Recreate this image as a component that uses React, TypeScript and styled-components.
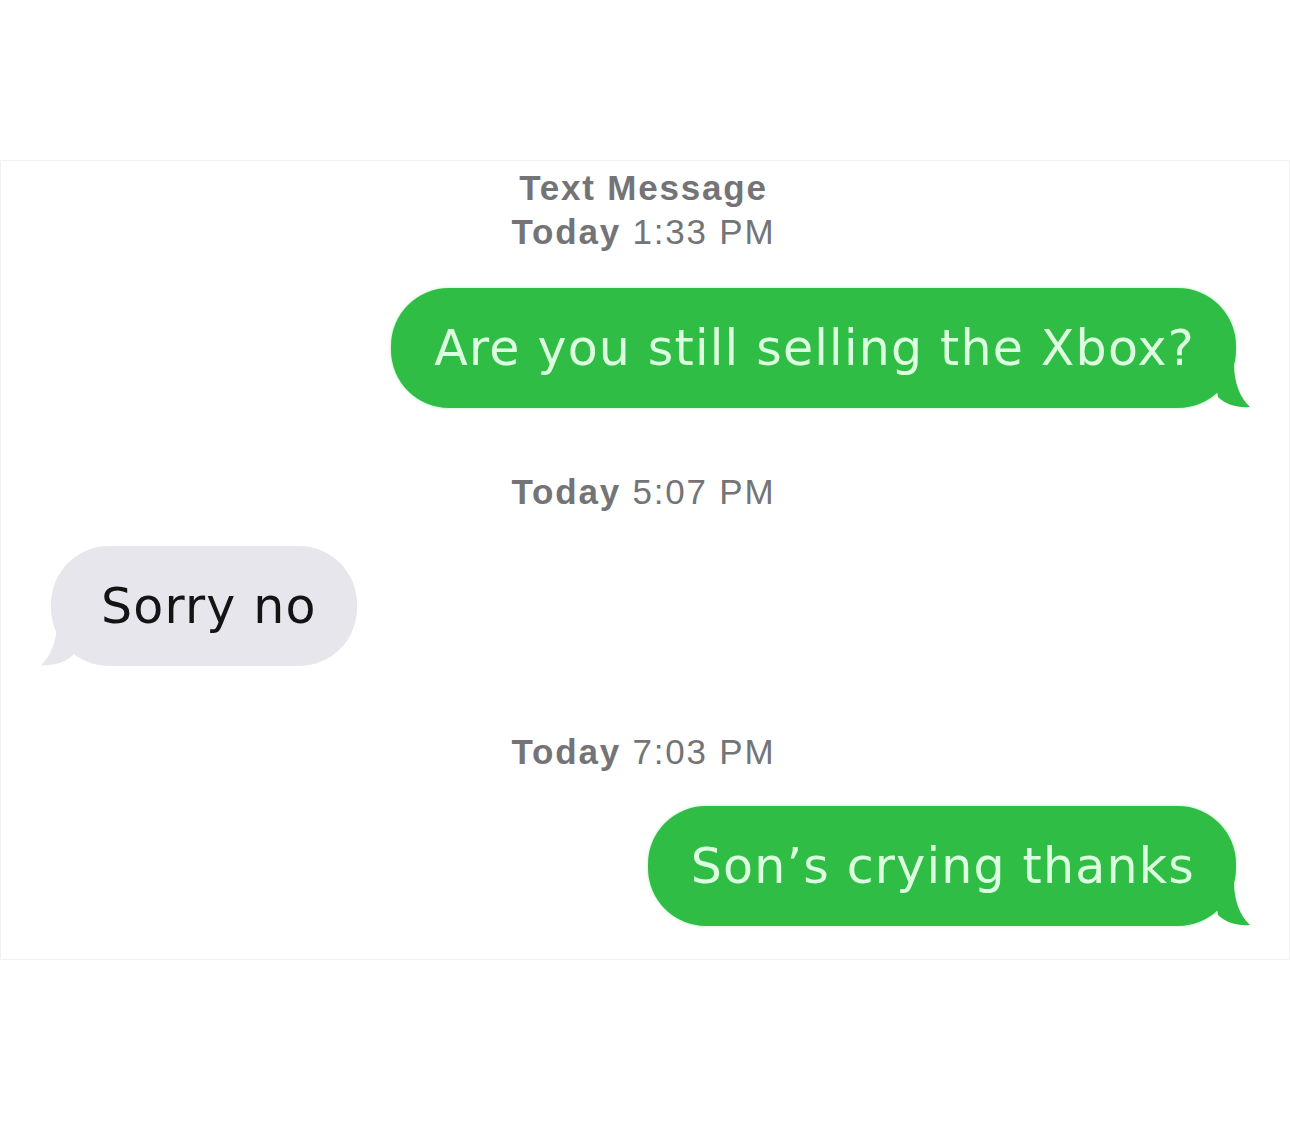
import React from "react";
import styled, { createGlobalStyle } from "styled-components";

const Global = createGlobalStyle`
  html, body { margin: 0; padding: 0; background: #ffffff; }
  body { font-family: "Liberation Sans", Arial, sans-serif; }
`;

const Page = styled.div`
  width: 1290px;
  height: 1148px;
  background: #ffffff;
  padding-top: 160px;
  box-sizing: border-box;
`;

const Panel = styled.div`
  height: 800px;
  border: 1px solid #f1f1f1;
  box-sizing: border-box;
  display: flex;
  flex-direction: column;
  padding: 5px 53px 0 50px;
`;

const Stamp = styled.div<{ $top: number }>`
  margin-top: ${(p) => p.$top}px;
  align-self: center;
  text-align: center;
  color: #747477;
  font-size: 35px;
  line-height: 44px;
  letter-spacing: 1.8px;
  font-family: "Liberation Sans", Arial, sans-serif;
`;

const Strong = styled.span`
  font-weight: 700;
`;

const Row = styled.div<{ $side: "left" | "right"; $top: number }>`
  display: flex;
  justify-content: ${(p) => (p.$side === "right" ? "flex-end" : "flex-start")};
  margin-top: ${(p) => p.$top}px;
`;

const Bubble = styled.div<{ $sent: boolean }>`
  position: relative;
  height: 120px;
  border-radius: 58px;
  padding: ${(p) => (p.$sent ? "0 41px 0 43px" : "0 40px 0 50px")};
  display: flex;
  align-items: center;
  font-family: "DejaVu Sans", "Liberation Sans", sans-serif;
  font-size: 49px;
  letter-spacing: 1.2px;
  white-space: nowrap;
  background: ${(p) => (p.$sent ? "#2fbd45" : "#e6e6ec")};
  color: ${(p) => (p.$sent ? "#dcffdf" : "#141414")};
  box-shadow: ${(p) => (p.$sent ? "0 0 3px rgba(60,210,90,0.45)" : "none")};
`;

const Tail = styled.svg<{ $side: "left" | "right" }>`
  position: absolute;
  bottom: 0;
  width: 40px;
  height: 44px;
  ${(p) => (p.$side === "right" ? "right: -16px;" : "left: -12px; transform: scaleX(-1);")}
`;

function BubbleTail({ side, color }: { side: "left" | "right"; color: string }) {
  return (
    <Tail $side={side} viewBox="0 0 40 44">
      <path d="M0 0 L22 0 C22 18 28 34 38 43 C26 44 14 41 6 33 Z" fill={color} />
    </Tail>
  );
}

export default function App() {
  return (
    <>
      <Global />
      <Page>
        <Panel>
          <Stamp $top={0}>
            <Strong>Text Message</Strong>
            <br />
            <Strong>Today</Strong> 1:33 PM
          </Stamp>
          <Row $side="right" $top={34}>
            <Bubble $sent>
              Are you still selling the Xbox?
              <BubbleTail side="right" color="#2fbd45" />
            </Bubble>
          </Row>
          <Stamp $top={62}>
            <Strong>Today</Strong> 5:07 PM
          </Stamp>
          <Row $side="left" $top={32}>
            <Bubble $sent={false}>
              Sorry no
              <BubbleTail side="left" color="#e6e6ec" />
            </Bubble>
          </Row>
          <Stamp $top={64}>
            <Strong>Today</Strong> 7:03 PM
          </Stamp>
          <Row $side="right" $top={32}>
            <Bubble $sent>
              Son’s crying thanks
              <BubbleTail side="right" color="#2fbd45" />
            </Bubble>
          </Row>
        </Panel>
      </Page>
    </>
  );
}
